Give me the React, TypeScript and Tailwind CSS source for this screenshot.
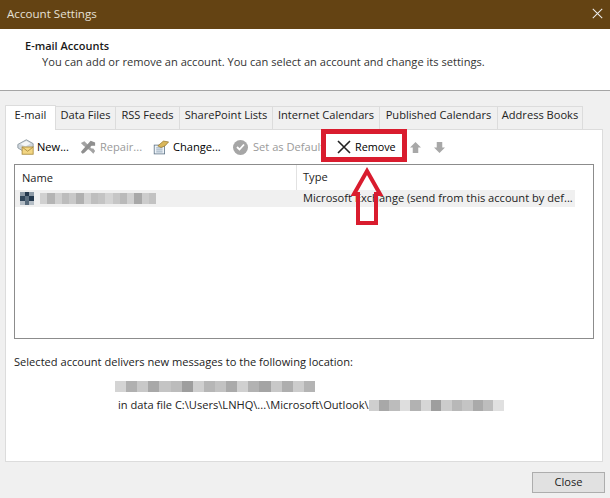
const font = { fontFamily: '"Open Sans", sans-serif' };

const tabs = ["Data Files", "RSS Feeds", "SharePoint Lists", "Internet Calendars", "Published Calendars", "Address Books"];
const tabWidths = ["w-[60px]", "w-[64px]", "w-[93px]", "w-[107px]", "w-[118px]", "w-[85px]"];

// pixelated redaction blur
function Redacted({ cells, className }: { cells: string[]; className: string }) {
  return (
    <div className={"flex blur-[0.6px] " + className}>
      {cells.map((c, i) => (
        <div key={i} className="h-full flex-1" style={{ background: c }} />
      ))}
    </div>
  );
}

function MailIcon() {
  return (
    <svg width="17" height="16" viewBox="0 0 20 18" className="shrink-0">
      <path d="M1 6 L11 0.5 L19 5 L19 9 L9 15 L1 10 Z" fill="#cfd6dc" stroke="#84919a" />
      <path d="M4 5.5 L11 2 L16 5 L10 8.5 Z" fill="#f4f6f7" />
      <rect x="6" y="9" width="13" height="8.5" fill="#f3d683" stroke="#a98a3c" />
      <path d="M6 9 L12.5 14 L19 9" fill="none" stroke="#a98a3c" />
    </svg>
  );
}

function RepairIcon() {
  return (
    <svg width="16" height="15" viewBox="0 0 18 16" className="shrink-0">
      <path d="M1 3 L5 1 L13 9 L15 9 L17 12 L15 15 L12 12 L4 6 Z" fill="#a3a3a3" />
      <path d="M17 2.5 L12 0.5 L3 10.5 L1 13 L3 15 L5 14 L13 6 L17 6 Z" fill="#8f8f8f" />
    </svg>
  );
}

function ChangeIcon() {
  return (
    <svg width="16" height="15" viewBox="0 0 20 18" className="shrink-0">
      <rect x="1.5" y="6" width="13" height="11" fill="#eef3f8" stroke="#5d7286" />
      <path d="M4 9.5h8M4 12h8M4 14.5h8" stroke="#7d94aa" />
      <path d="M6 7 L13 1 L19.5 2 L15 7 L10 9 Z" fill="#d9b75c" stroke="#8c6d22" strokeWidth="0.8" />
    </svg>
  );
}

function Cross({ size, weight, color }: { size: number; weight: number; color: string }) {
  return (
    <svg width={size} height={size} viewBox="0 0 14 14" className="shrink-0">
      <path d="M1 1 L13 13 M13 1 L1 13" stroke={color} strokeWidth={weight} fill="none" />
    </svg>
  );
}

function BlockArrow({ down }: { down?: boolean }) {
  return (
    <svg width="11" height="11" viewBox="0 0 10 10" className={"shrink-0 " + (down ? "rotate-180" : "")}>
      <path d="M5 0 L10 5 L7.5 5 L7.5 10 L2.5 10 L2.5 5 L0 5 Z" fill="#a8a8a8" />
    </svg>
  );
}

export default function App() {
  return (
    <div className="relative flex h-[498px] w-[610px] flex-col overflow-hidden bg-[#f0f0f0] text-[11.1px] text-[#222]" style={font}>
      <div className="flex h-[29px] items-center justify-between bg-[#644313] pr-[7px] pb-[2px] pl-[7px] text-[11.6px] text-[#e6e0d6]">
        <span>Account Settings</span>
        <Cross size={11} weight={1.3} color="#eeeeee" />
      </div>

      <div className="h-[62px] border-b border-[#a5a5a5] bg-white pt-[9px] pl-[25px]">
        <div className="text-[11px] leading-[16px] font-semibold text-[#1a1a1a]">E-mail Accounts</div>
        <div className="pl-[17px] leading-[16px] text-[#333]">You can add or remove an account. You can select an account and change its settings.</div>
      </div>

      <div className="flex h-[38px] items-end pl-[5px]">
        <div className="z-10 -mb-px flex h-[25px] w-[51px] items-start justify-center rounded-t-[1px] border border-b-0 border-[#dcdcdc] bg-white pt-[1px]">E-mail</div>
        {tabs.map((t, i) => (
          <div key={t} className={"flex h-[23px] items-center justify-center border-t border-r border-[#dcdcdc] pb-[5px] " + tabWidths[i]}>
            {t}
          </div>
        ))}
      </div>

      <div className="mr-[7px] ml-[5px] flex h-[333px] flex-col border border-[#dcdcdc] bg-white px-[8px]">
        <div className="flex h-[34px] items-center pl-[3px]">
          <MailIcon />
          <span className="ml-[3px] w-[43px] shrink-0 text-black">New...</span>
          <RepairIcon />
          <span className="ml-[4px] w-[53px] shrink-0 text-[#9a9a9a]">Repair...</span>
          <ChangeIcon />
          <span className="ml-[4px] w-[60px] shrink-0 text-black">Change...</span>
          <div className="flex h-[15px] w-[15px] shrink-0 items-center justify-center rounded-full bg-[#a6a6a6]">
            <svg width="9" height="8" viewBox="0 0 9 8">
              <path d="M1 4 L3.5 6.5 L8 1.5" stroke="white" strokeWidth="1.8" fill="none" />
            </svg>
          </div>
          <span className="ml-[5px] w-[84px] shrink-0 whitespace-nowrap text-[#9a9a9a]">Set as Default</span>
          <Cross size={14} weight={1.6} color="#222222" />
          <span className="ml-[4px] w-[55px] shrink-0 text-[10.8px] text-black">Remove</span>
          <BlockArrow />
          <div className="ml-[13px]">
            <BlockArrow down />
          </div>
        </div>

        <div className="h-[175px] border border-[#8c8c8c]">
          <div className="flex h-[25px] items-center pr-[18px]">
            <div className="w-[282px] shrink-0 border-r border-[#e2e2e2] pl-[7px] leading-[25px]">Name</div>
            <div className="pl-[6px]">Type</div>
          </div>
          <div className="mr-[18px] flex h-[17px] items-center bg-[#f0f0f0]">
            <div className="flex w-[282px] shrink-0 items-center pl-[5px]">
              <div className="grid h-[14px] w-[14px] grid-cols-3 grid-rows-3">
                <div className="bg-[#8d9aa6]" />
                <div className="bg-[#24384d]" />
                <div className="bg-[#8d9aa6]" />
                <div className="bg-[#31465a]" />
                <div className="bg-[#5c6f80]" />
                <div className="bg-[#24384d]" />
                <div className="bg-[#b4bdc5]" />
                <div className="bg-[#56697a]" />
                <div className="bg-[#b4bdc5]" />
              </div>
              <Redacted
                className="ml-[6px] h-[11px] w-[116px]"
                cells={["#d0d0d0", "#b4b4b4", "#cfcfcf", "#bcbcbc", "#c8c8c8", "#b0b0b0", "#d2d2d2", "#bebebe", "#c4c4c4", "#d4d4d4", "#c6c6c6", "#bababa", "#d0d0d0", "#a8a8a8", "#cccccc", "#c2c2c2"]}
              />
            </div>
            <div className="pl-[6px] whitespace-nowrap">Microsoft Exchange (send from this account by def...</div>
          </div>
        </div>

        <div className="pt-[15px] leading-[16px]">Selected account delivers new messages to the following location:</div>
        <Redacted
          className="mt-[11px] ml-[101px] h-[11px] w-[200px]"
          cells={["#d4d4d4", "#b0b0b0", "#c8c8c8", "#a8a8a8", "#c4c4c4", "#bcbcbc", "#9e9e9e", "#cfcfcf", "#b6b6b6", "#c2c2c2", "#aaaaaa", "#d0d0d0", "#b2b2b2", "#a4a4a4", "#c8c8c8", "#aeaeae", "#cccccc", "#b4b4b4"]}
        />
        <div className="mt-[5px] ml-[104px] flex h-[16px] items-center whitespace-nowrap">
          <span>in data file C:\Users\LNHQ\...\Microsoft\Outlook\</span>
          <Redacted
            className="h-[11px] w-[135px]"
            cells={["#cfcfcf", "#a8a8a8", "#bcbcbc", "#dedede", "#b2b2b2", "#d6d6d6", "#9e9e9e", "#cccccc", "#b8b8b8", "#c4c4c4", "#aaaaaa", "#bdbdbd", "#e0e0e0"]}
          />
        </div>
      </div>

      <div className="flex flex-1 items-start justify-end pt-[10px] pr-[5px]">
        <div className="flex h-[21px] w-[73px] items-center justify-center border border-[#adadad] bg-[#e1e1e1]">Close</div>
      </div>

      {/* red annotation over the toolbar */}
      <div className="absolute top-[129px] left-[321px] h-[33px] w-[86px] border-[5px] border-[#d91c2e]" />
      <svg className="absolute top-[162px] left-[345px]" width="45" height="70" viewBox="0 0 45 70">
        <path d="M22 9 L35 32 L31 32 L31 61 L13 61 L13 32 L9 32 Z" fill="none" stroke="#d91c2e" strokeWidth="4" strokeLinejoin="miter" />
      </svg>
    </div>
  );
}
